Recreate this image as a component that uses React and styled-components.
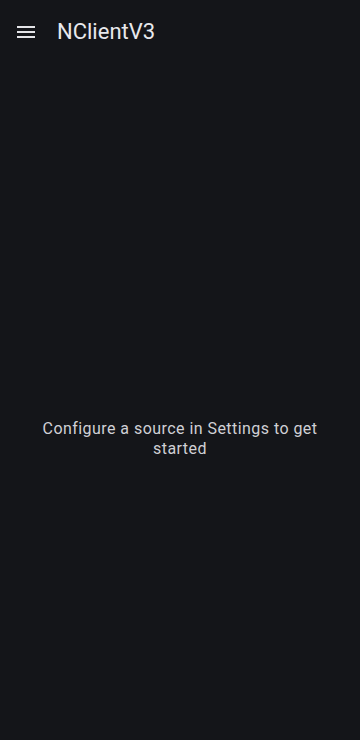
import React from 'react'
import styled, { createGlobalStyle } from "styled-components";

const Global = createGlobalStyle`
    html, body {
        margin: 0;
        padding: 0;
        background: #141519;
    }
    * {
        box-sizing: border-box;
    }
`;

const Screen = styled.div`
    width: 360px;
    height: 740px;
    display: flex;
    flex-direction: column;
    background: #141519;
    font-family: Roboto, "Noto Sans", sans-serif;
    overflow: hidden;
`;

const TopBar = styled.header`
    height: 64px;
    display: flex;
    align-items: center;
    padding-left: 2px;
    gap: 7px;
    flex-shrink: 0;
`;

const IconButton = styled.button`
    width: 48px;
    height: 48px;
    display: flex;
    align-items: center;
    justify-content: center;
    border: none;
    background: transparent;
    padding: 0;
    color: #e3e3e7;
`;

const Title = styled.h1`
    margin: 0;
    font-size: 22px;
    line-height: 28px;
    font-weight: 400;
    color: #e8e8ec;
`;

const Content = styled.main`
    flex: 1;
    display: flex;
    align-items: center;
    justify-content: center;
    padding: 74px 28px 0 28px;
`;

const Message = styled.p`
    margin: 0;
    text-align: center;
    font-size: 16px;
    line-height: 20px;
    color: #d0d0d5;
    letter-spacing: 0.45px;
`;

function MenuIcon() {
    return (
        <svg width="24" height="24" viewBox="0 0 24 24" fill="currentColor">
            <path d="M3 18h18v-2H3v2zm0-5h18v-2H3v2zm0-7v2h18V6H3z" />
        </svg>
    )
}

function App() {
    return (
        <Screen>
            <Global />
            <TopBar>
                <IconButton aria-label="menu">
                    <MenuIcon />
                </IconButton>
                <Title>NClientV3</Title>
            </TopBar>
            <Content>
                <Message>Configure a source in Settings to get started</Message>
            </Content>
        </Screen>
    )
}

export default App
